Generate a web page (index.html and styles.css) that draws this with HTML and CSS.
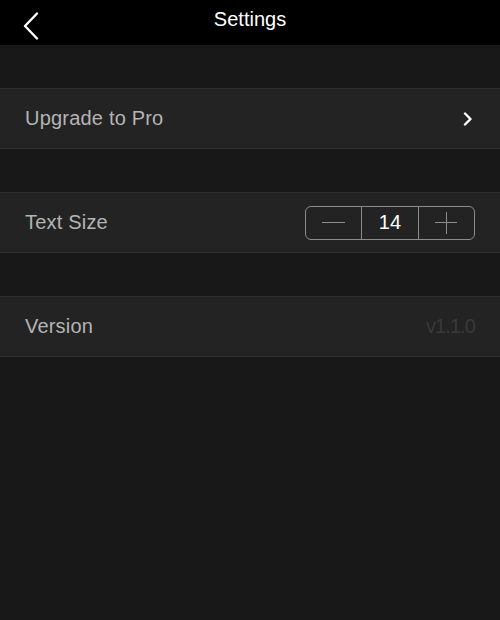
FILE: index.html
```html
<!DOCTYPE html>
<html>
<head>
<meta charset="utf-8">
<link rel="stylesheet" href="styles.css">
</head>
<body>
<header class="nav">
  <svg class="back" width="16" height="28" viewBox="0 0 16 28"><path d="M14 1.5 L2 14 L14 26.5" fill="none" stroke="#fff" stroke-width="2.4" stroke-linecap="round" stroke-linejoin="round"/></svg>
  <h1 class="title">Settings</h1>
</header>
<main class="content">
  <div class="row">
    <span class="label">Upgrade to Pro</span>
    <svg class="chev" width="10" height="14" viewBox="0 0 10 14"><path d="M2 1.5 L7.5 7 L2 12.5" fill="none" stroke="#fff" stroke-width="2.4" stroke-linecap="round" stroke-linejoin="round"/></svg>
  </div>
  <div class="row">
    <span class="label">Text Size</span>
    <div class="stepper">
      <button class="seg"><span class="minus"></span></button>
      <span class="seg value">14</span>
      <button class="seg"><span class="plus"></span></button>
    </div>
  </div>
  <div class="row">
    <span class="label">Version</span>
    <span class="version">v1.1.0</span>
  </div>
</main>
</body>
</html>
```
FILE: styles.css
```css
* { box-sizing: border-box; }
html, body { margin: 0; padding: 0; }
body {
  background: #181818;
  font-family: "Liberation Sans", Arial, sans-serif;
  width: 500px;
  height: 620px;
  overflow: hidden;
}
.nav {
  height: 45px;
  background: #000;
  position: relative;
  display: flex;
  align-items: center;
  justify-content: center;
}
.back {
  position: absolute;
  left: 23px;
  top: 12px;
}
.title {
  margin: 0;
  color: #fff;
  font-weight: normal;
  font-size: 20px;
  margin-top: -7px;
  letter-spacing: 0;
}
.content {
  display: flex;
  flex-direction: column;
  gap: 43px;
  padding-top: 43px;
}
.row {
  height: 61px;
  background: #232323;
  border-top: 1px solid #2f2f2f;
  border-bottom: 1px solid #2f2f2f;
  display: flex;
  align-items: center;
  justify-content: space-between;
  padding: 0 25px 0 25px;
}
.label {
  color: #b4b4b4;
  font-size: 20px;
  letter-spacing: 0.2px;
}
.chev { margin-right: 2px; }
.stepper {
  display: flex;
  width: 170px;
  height: 34px;
  border: 1.5px solid #8c8c8c;
  border-radius: 6px;
  overflow: hidden;
}
.seg {
  flex: 1;
  display: flex;
  align-items: center;
  justify-content: center;
  background: transparent;
  border: 0;
  padding: 0;
  margin: 0;
  color: #fff;
  font-family: inherit;
  font-size: 20px;
}
.value {
  border-left: 1.5px solid #8c8c8c;
  border-right: 1.5px solid #8c8c8c;
}
.minus {
  width: 23px;
  height: 1.5px;
  background: #8c8c8c;
}
.plus {
  width: 22px;
  height: 22px;
  position: relative;
}
.plus::before, .plus::after {
  content: "";
  position: absolute;
  background: #8c8c8c;
}
.plus::before { left: 0; right: 0; top: 10.25px; height: 1.5px; }
.plus::after { top: 0; bottom: 0; left: 10.25px; width: 1.5px; }
.version {
  color: #393939;
  font-size: 20px;
  letter-spacing: -0.9px;
}
```
